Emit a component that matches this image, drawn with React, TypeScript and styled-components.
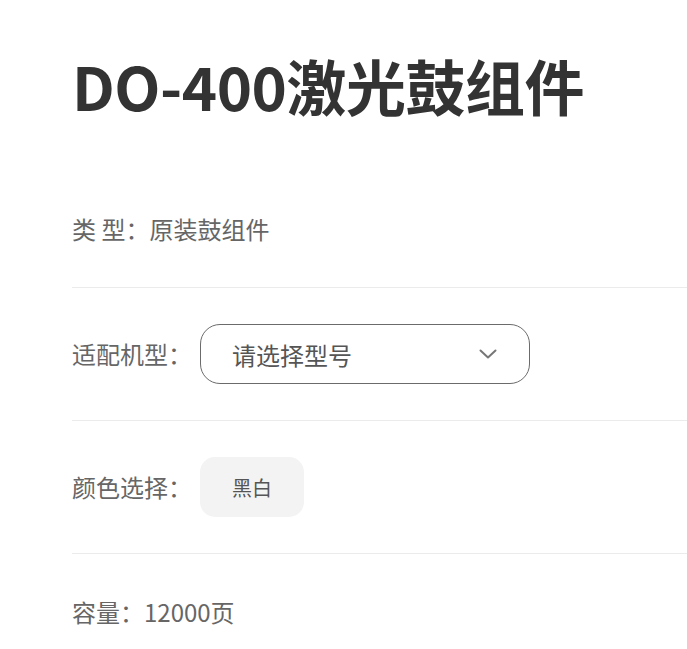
import React from "react";
import styled, { createGlobalStyle } from "styled-components";

const GlobalStyle = createGlobalStyle`
  html, body {
    margin: 0;
    padding: 0;
    background: #ffffff;
    overflow: hidden;
  }
  body {
    font-family: "Noto Sans CJK SC", "Noto Sans", sans-serif;
  }
`;

const Page = styled.div`
  padding: 35px 0 0 72px;
  width: 615px;
`;

const Title = styled.h1`
  margin: 0 0 36px;
  font-size: 60px;
  line-height: 100px;
  font-weight: 700;
  letter-spacing: -0.5px;
  color: #333333;
  white-space: nowrap;
`;

const Row = styled.div<{ $last?: boolean }>`
  display: flex;
  align-items: center;
  padding: 36px 0;
  border-bottom: ${(p) => (p.$last ? "none" : "1px solid #ebebeb")};
`;

const Text = styled.span`
  font-size: 24px;
  line-height: 44px;
  color: #666666;
  white-space: pre;
`;

const Label = styled(Text)`
  margin-right: 8px;
`;

const Select = styled.div`
  box-sizing: border-box;
  width: 330px;
  height: 60px;
  border: 1px solid #6b6b6b;
  border-radius: 20px;
  display: flex;
  align-items: center;
  justify-content: space-between;
  padding: 0 32px 0 31px;
  font-size: 24px;
  color: #555555;
`;

const Chevron = styled.svg`
  width: 18px;
  height: 10px;
  display: block;
`;

const ColorChip = styled.div`
  box-sizing: border-box;
  width: 104px;
  height: 60px;
  border-radius: 15px;
  background: #f3f3f3;
  display: flex;
  align-items: center;
  justify-content: center;
  font-size: 20px;
  color: #555555;
`;

export default function App() {
  return (
    <>
      <GlobalStyle />
      <Page>
        <Title>DO-400激光鼓组件</Title>
        <Row>
          <Text>类 型：原装鼓组件</Text>
        </Row>
        <Row>
          <Label>适配机型：</Label>
          <Select>
            <span>请选择型号</span>
            <Chevron viewBox="0 0 18 10" fill="none">
              <path d="M1.5 1.5 L9 8.5 L16.5 1.5" stroke="#777777" strokeWidth="2" strokeLinecap="round" strokeLinejoin="round" />
            </Chevron>
          </Select>
        </Row>
        <Row>
          <Label>颜色选择：</Label>
          <ColorChip>黑白</ColorChip>
        </Row>
        <Row $last>
          <Text>容量：12000页</Text>
        </Row>
      </Page>
    </>
  );
}
